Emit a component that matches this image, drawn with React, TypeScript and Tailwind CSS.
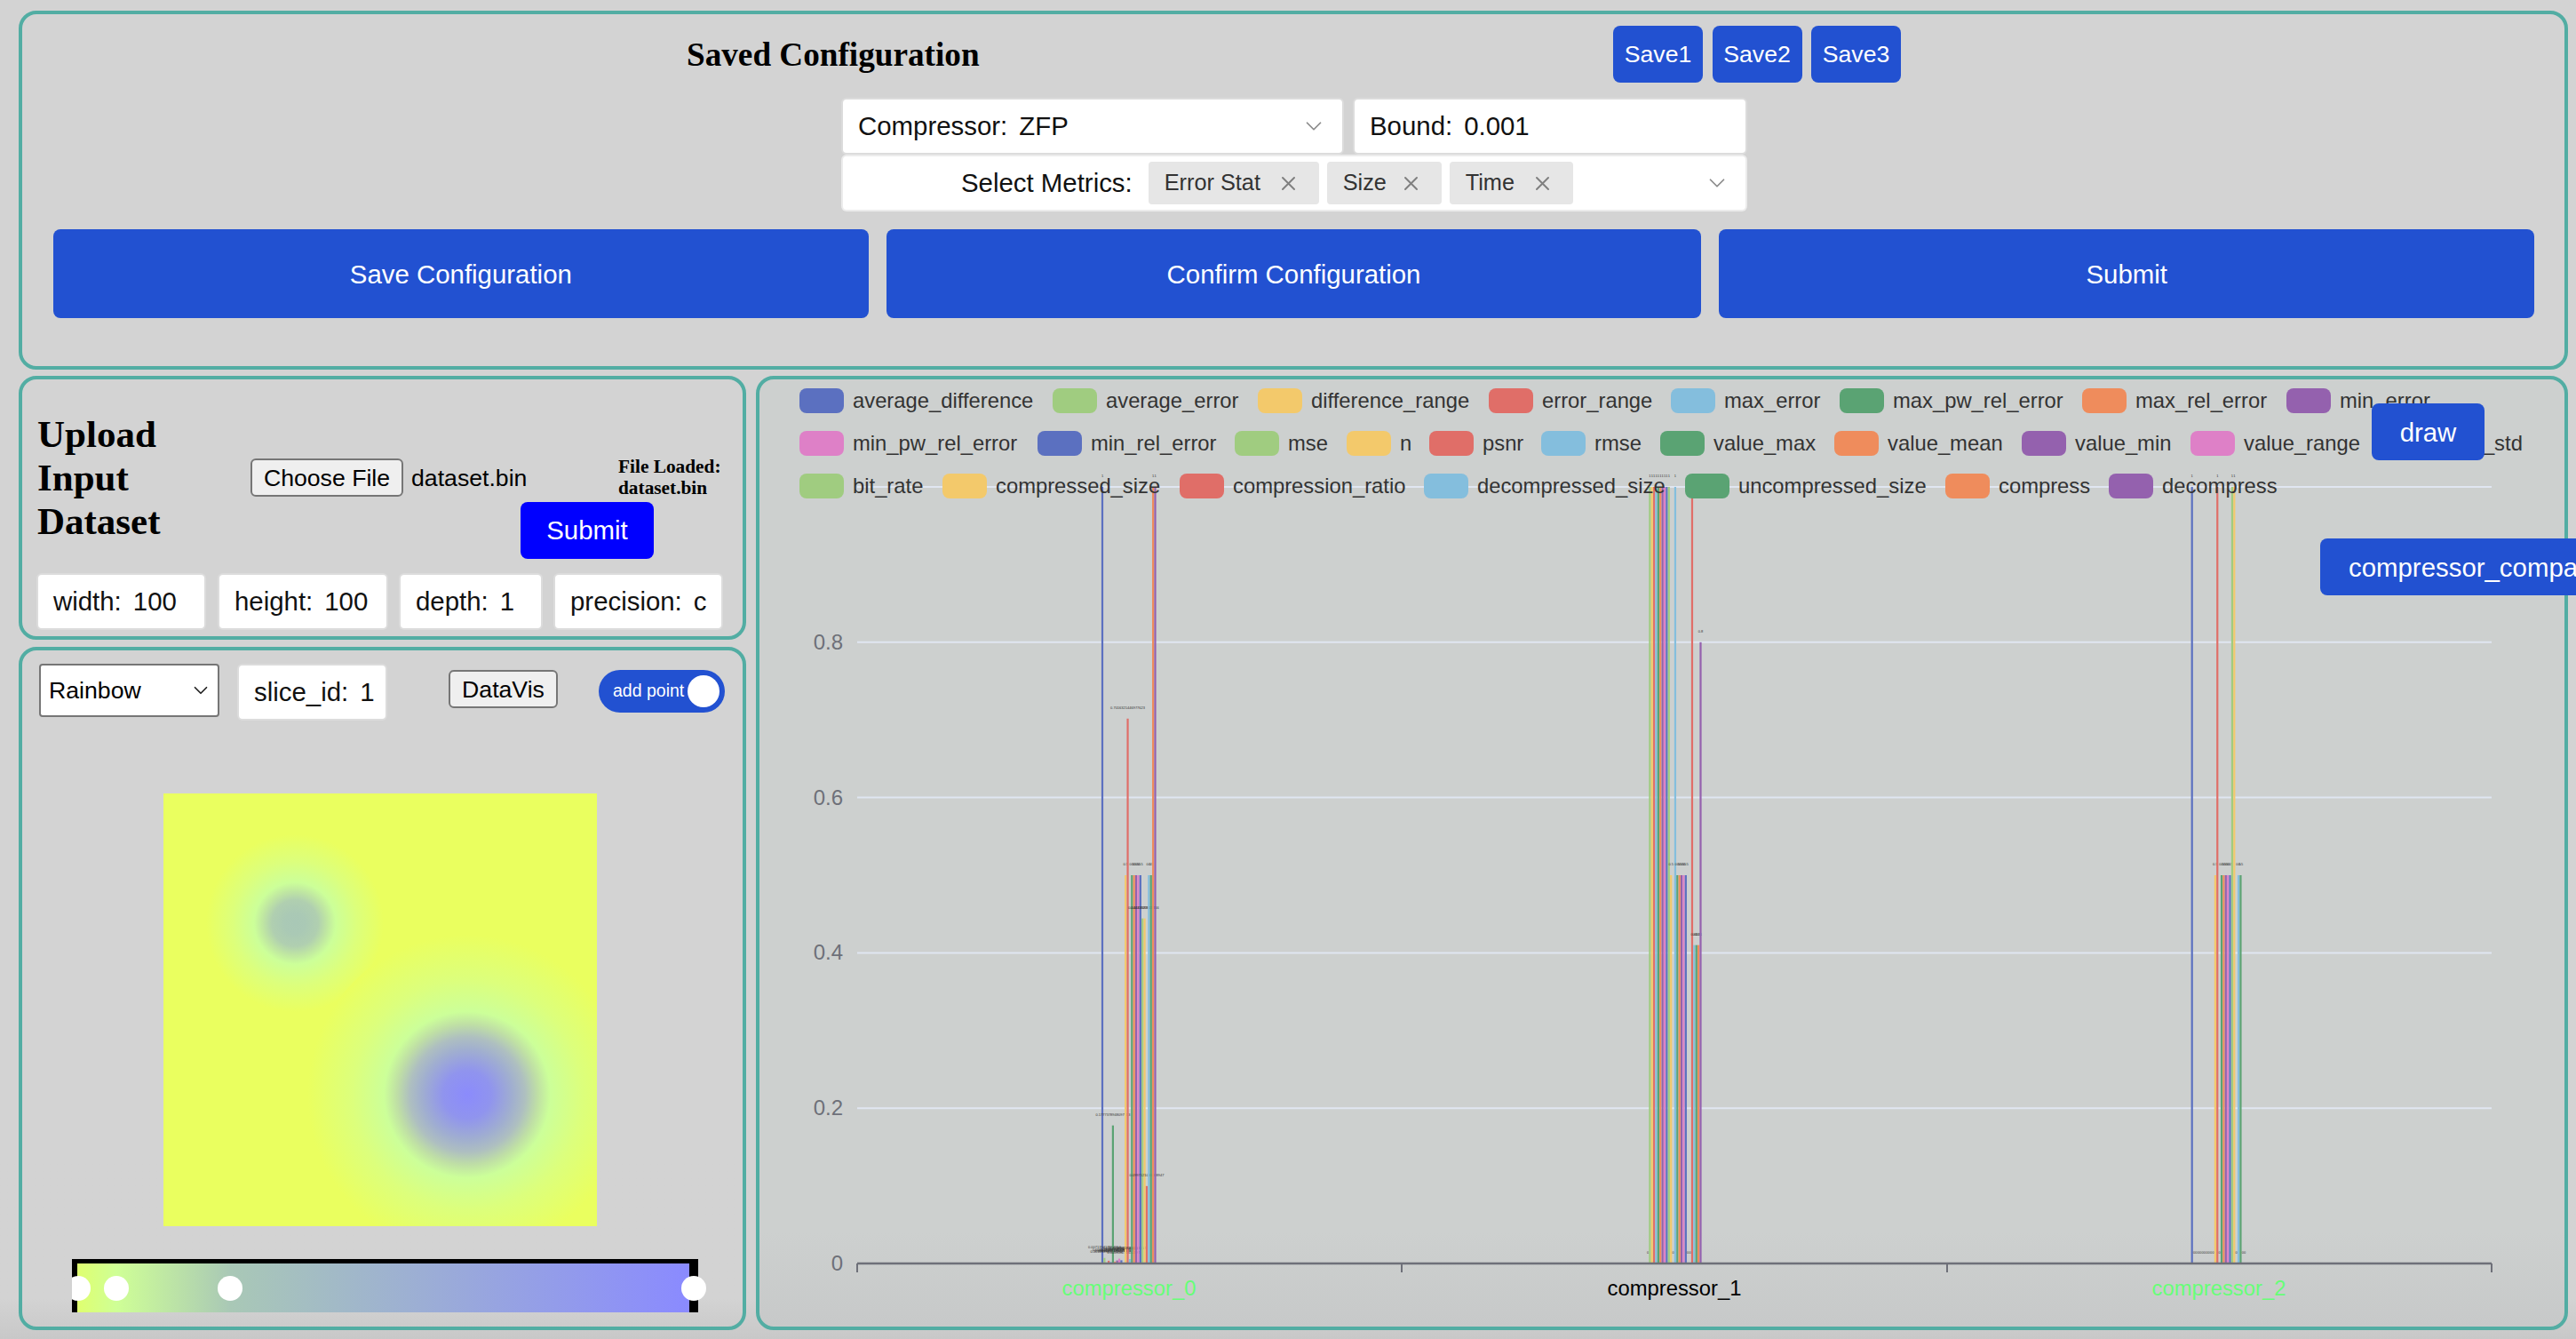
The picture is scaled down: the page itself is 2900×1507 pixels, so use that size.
import { ChevronDown } from 'lucide-react'

const BLUE = 'bg-[#2251d1]'

const COLORS = ['#5b70c0', '#a0cc80', '#f3c96b', '#e06e68', '#84bedd', '#5aa373', '#ef8c5c', '#9461ae', '#de80c7']

const LEGEND: { name: string; x: number; y: number }[] = [
  { name: 'average_difference', x: 900, y: 451 },
  { name: 'average_error', x: 1185, y: 451 },
  { name: 'difference_range', x: 1416, y: 451 },
  { name: 'error_range', x: 1676, y: 451 },
  { name: 'max_error', x: 1881, y: 451 },
  { name: 'max_pw_rel_error', x: 2071, y: 451 },
  { name: 'max_rel_error', x: 2344, y: 451 },
  { name: 'min_error', x: 2574, y: 451 },
  { name: 'min_pw_rel_error', x: 900, y: 499 },
  { name: 'min_rel_error', x: 1168, y: 499 },
  { name: 'mse', x: 1390, y: 499 },
  { name: 'n', x: 1516, y: 499 },
  { name: 'psnr', x: 1609, y: 499 },
  { name: 'rmse', x: 1735, y: 499 },
  { name: 'value_max', x: 1869, y: 499 },
  { name: 'value_mean', x: 2065, y: 499 },
  { name: 'value_min', x: 2276, y: 499 },
  { name: 'value_range', x: 2466, y: 499 },
  { name: 'value_std', x: 2678, y: 499 },
  { name: 'bit_rate', x: 900, y: 547 },
  { name: 'compressed_size', x: 1061, y: 547 },
  { name: 'compression_ratio', x: 1328, y: 547 },
  { name: 'decompressed_size', x: 1603, y: 547 },
  { name: 'uncompressed_size', x: 1897, y: 547 },
  { name: 'compress', x: 2190, y: 547 },
  { name: 'decompress', x: 2374, y: 547 },
]

const GROUPS: { start: number; values: number[] }[] = [
  {
    start: 1241,
    values: [
      1, 0.007139417892314, 0.001283945170263, 0.003517420938126, 0.002160394857213, 0.1777378948097913,
      0.002438190275634, 0.003917204586321, 0.006201938475612, 0.004128395017263, 0.000318274650192, 0.5,
      0.7016321446977623, 0.005718293046152, 0.5, 0.5, 0.5, 0.5, 0.5, 0.4443182905716, 0.4443182905716,
      0.0997121034488947, 0.5, 0.5, 1, 1,
    ],
  },
  {
    start: 1855,
    values: [0, 1, 1, 1, 1, 1, 1, 1, 1, 1, 1, 0.5, 0, 1, 0.5, 0.5, 0.5, 0.5, 0.5, 0, 0, 1, 0.41, 0.41, 0.41, 0.8],
  },
  {
    start: 2467.7,
    values: [1, 0, 0, 0, 0, 0, 0, 0, 0, 0, 0, 0.5, 1, 0, 0.5, 0.5, 0.5, 0.5, 0.5, 1, 1, 0, 0.5, 0.5, 0, 0],
  },
]

const BASE_Y = 1422
const UNIT = 874

function Field({ label, value, className }: { label: string; value: string; className: string }) {
  return (
    <div className={`flex h-[60px] items-center gap-[13px] overflow-hidden rounded-[4px] bg-white pl-[17px] text-[29.4px] text-[#111] ring-2 ring-[#dcdcdc] ${className}`}>
      <span>{label}</span>
      <span>{value}</span>
    </div>
  )
}

function Chevron({ className }: { className?: string }) {
  return <ChevronDown className={className} size={30} strokeWidth={1.4} color="#8a8a8a" />
}

function Tag({ label, className }: { label: string; className: string }) {
  return (
    <div className={`flex h-[48px] items-center justify-between rounded-[4px] bg-[#e6e6e6] pl-[18px] pr-[26px] text-[25.3px] text-[#333] ${className}`}>
      <span>{label}</span>
      <svg width="17" height="17" viewBox="0 0 17 17" stroke="#808080" strokeWidth="2" strokeLinecap="round">
        <path d="M2 2l13 13M15 2L2 15" />
      </svg>
    </div>
  )
}

function Heatmap() {
  return (
    <svg width="488" height="487" viewBox="0 0 488 487" className="block">
      <defs>
        <radialGradient id="smallBlob" gradientUnits="userSpaceOnUse" cx="148" cy="146" r="100">
          <stop offset="0" stopColor="#a9c8b6" />
          <stop offset="0.12" stopColor="#aac9b5" />
          <stop offset="0.26" stopColor="#b0cfb0" />
          <stop offset="0.36" stopColor="#bfe6a2" />
          <stop offset="0.46" stopColor="#ccff99" />
          <stop offset="0.7" stopColor="#dcff7c" />
          <stop offset="1" stopColor="#eaff5f" />
        </radialGradient>
        <radialGradient id="bigBlob" gradientUnits="userSpaceOnUse" cx="342" cy="339" r="180">
          <stop offset="0" stopColor="#8b8bfc" />
          <stop offset="0.15" stopColor="#9094ee" />
          <stop offset="0.28" stopColor="#a0aed0" />
          <stop offset="0.36" stopColor="#aebfc0" />
          <stop offset="0.44" stopColor="#bfdfa5" />
          <stop offset="0.52" stopColor="#ccff99" />
          <stop offset="0.72" stopColor="#dcff7c" />
          <stop offset="1" stopColor="#eaff5f" />
        </radialGradient>
      </defs>
      <rect width="488" height="487" fill="#eaff5f" />
      <circle cx="148" cy="146" r="100" fill="url(#smallBlob)" />
      <circle cx="342" cy="339" r="180" fill="url(#bigBlob)" />
    </svg>
  )
}

function ColorBar() {
  return (
    <svg width="705" height="60" viewBox="0 0 705 60" className="block overflow-visible">
      <defs>
        <linearGradient id="barFill" gradientUnits="userSpaceOnUse" x1="6" y1="0" x2="695" y2="0">
          <stop offset="0" stopColor="#dfff6f" />
          <stop offset="0.064" stopColor="#cfff96" />
          <stop offset="0.25" stopColor="#a9c8b6" />
          <stop offset="1" stopColor="#8a8aff" />
        </linearGradient>
        <clipPath id="firstHandle">
          <rect x="0" y="0" width="40" height="60" />
        </clipPath>
      </defs>
      <rect width="705" height="60" fill="#000" />
      <rect x="6" y="5" width="689" height="55" fill="url(#barFill)" />
      <circle cx="7" cy="33" r="14" fill="#fff" clipPath="url(#firstHandle)" />
      <circle cx="50" cy="33" r="14" fill="#fff" />
      <circle cx="178" cy="33" r="14" fill="#fff" />
      <circle cx="700" cy="33" r="14" fill="#fff" />
    </svg>
  )
}

function Chart() {
  return (
    <svg width="2032" height="1066" viewBox="855 427 2032 1066" className="block overflow-visible">
      {[1, 0.8, 0.6, 0.4, 0.2].map((v) => (
        <line key={v} x1="965" x2="2805" y1={BASE_Y - v * UNIT} y2={BASE_Y - v * UNIT} stroke="#e0e6f1" strokeWidth="2" />
      ))}
      {[0, 0.2, 0.4, 0.6, 0.8].map((v) => (
        <text key={v} x="949" y={BASE_Y - v * UNIT + 8} textAnchor="end" fontSize="24" fill="#6e7079">
          {v}
        </text>
      ))}
      {GROUPS.map((g) =>
        g.values.map((v, i) => {
          const x = g.start + i * 2.38
          const top = BASE_Y - v * UNIT
          return (
            <g key={`${g.start}-${i}`}>
              <rect x={x - 1.1} y={top} width="2.2" height={v * UNIT} fill={COLORS[i % 9]} />
              <text x={x} y={top - 11} textAnchor="middle" fontSize="4" fill="#333">
                {v}
              </text>
            </g>
          )
        }),
      )}
      <line x1="965" x2="2805" y1={BASE_Y} y2={BASE_Y} stroke="#6e7079" strokeWidth="2.5" />
      {[965, 1578, 2192, 2805].map((x) => (
        <line key={x} x1={x} x2={x} y1={BASE_Y} y2={BASE_Y + 10} stroke="#6e7079" strokeWidth="2" />
      ))}
      <text x="1271" y="1458" textAnchor="middle" fontSize="23.8" fill="#66ff77">compressor_0</text>
      <text x="1885" y="1458" textAnchor="middle" fontSize="23.8" fill="#000">compressor_1</text>
      <text x="2498" y="1458" textAnchor="middle" fontSize="23.8" fill="#66ff77">compressor_2</text>
      {LEGEND.map((item, i) => (
        <g key={item.name}>
          <rect x={item.x} y={item.y - 14} width="50" height="28" rx="8" fill={COLORS[i % 9]} />
          <text x={item.x + 60} y={item.y + 8} fontSize="23.8" fill="#333">
            {item.name}
          </text>
        </g>
      ))}
    </svg>
  )
}

export default function App() {
  return (
    <div className="h-[1507px] w-[2900px] overflow-hidden bg-[#d3d3d3] bg-linear-to-b from-[#d3d3d3] from-[97%] to-[#c8c8c8] pl-[21px] pt-[12px] font-['Liberation_Sans',Arial,sans-serif] text-black">
      <section className="h-[404px] w-[2870px] rounded-[20px] border-4 border-[#52ada3] pl-[35px] pr-[34px]">
        <div className="flex h-[77px] items-end">
          <h2 className="ml-[713px] h-[64px] w-[330px] whitespace-nowrap font-['Liberation_Serif',serif] text-[37.2px] font-bold leading-[66px]">
            Saved Configuration
          </h2>
          <div className="ml-[713px] flex gap-[10.5px]">
            {['Save1', 'Save2', 'Save3'].map((s) => (
              <button key={s} className={`h-[64px] w-[101px] rounded-[8px] text-[26.67px] text-white ${BLUE}`}>
                {s}
              </button>
            ))}
          </div>
        </div>
        <div className="ml-[889px] mt-[19px] w-[1016px]">
          <div className="flex gap-[14px]">
            <div className="relative w-[562px]">
              <Field label="Compressor:" value="ZFP" className="w-full" />
              <Chevron className="absolute right-[17px] top-[15px]" />
            </div>
            <Field label="Bound:" value="0.001" className="w-[440px]" />
          </div>
          <div className="mt-[4px] flex h-[60px] items-center rounded-[4px] bg-white pl-[133px] pr-[17px] ring-2 ring-[#ececec]">
            <span className="text-[29.4px] text-[#111]">Select Metrics:</span>
            <div className="ml-[18px] flex gap-[9px]">
              <Tag label="Error Stat" className="w-[192px]" />
              <Tag label="Size" className="w-[129px]" />
              <Tag label="Time" className="w-[139px]" />
            </div>
            <Chevron className="ml-auto" />
          </div>
        </div>
        <div className="mt-[22px] flex gap-[20px]">
          {['Save Configuration', 'Confirm Configuration', 'Submit'].map((s) => (
            <button key={s} className={`h-[100px] flex-1 rounded-[8px] pt-[2px] text-[29.4px] text-white ${BLUE}`}>
              {s}
            </button>
          ))}
        </div>
      </section>

      <div className="mt-[7px] flex gap-[11px]">
        <div className="flex w-[819px] flex-col gap-[8px]">
          <section className="h-[297px] rounded-[20px] border-4 border-[#52ada3]">
            <div className="flex h-[220px] pl-[17px] pt-[37px]">
              <h2 className="w-[240px] font-['Liberation_Serif',serif] text-[43px] font-bold leading-[49px]">
                Upload
                <br />
                Input
                <br />
                Dataset
              </h2>
              <div className="mt-[52px] flex h-[43px] w-[304px] items-center whitespace-nowrap text-[26.67px]">
                <button className="h-[43px] w-[172px] shrink-0 rounded-[6px] border-2 border-[#767676] bg-[#efefef]">Choose File</button>
                <span className="ml-[9px]">dataset.bin</span>
              </div>
              <div className="mt-[49px]">
                <p className="ml-[110px] whitespace-nowrap font-['Liberation_Serif',serif] text-[21.33px] font-bold leading-[24px]">
                  File Loaded:
                  <br />
                  dataset.bin
                </p>
                <button className="mt-[4px] h-[64px] w-[150px] rounded-[8px] bg-[#0000ff] pt-[1px] text-[29.4px] text-white">Submit</button>
              </div>
            </div>
            <div className="ml-[18px] flex gap-[16px]">
              <Field label="width:" value="100" className="w-[187px]" />
              <Field label="height:" value="100" className="ml-[1px] w-[188px]" />
              <Field label="depth:" value="1" className="w-[158px]" />
              <Field label="precision:" value="c" className="w-[187px]" />
            </div>
          </section>

          <section className="h-[769px] rounded-[20px] border-4 border-[#52ada3]">
            <div className="ml-[19px] mt-[15px] flex items-start">
              <div className="flex h-[60px] w-[203px] items-center justify-between rounded-[4px] border-2 border-[#767676] bg-white pl-[9px] pr-[6px] text-[26.67px]">
                <span>Rainbow</span>
                <ChevronDown size={26} strokeWidth={1.6} color="#222" />
              </div>
              <Field label="slice_id:" value="1" className="ml-[22px] mt-[2px] w-[165px]" />
              <button className="ml-[71px] mt-[7px] h-[43px] w-[123px] rounded-[6px] border-2 border-[#767676] bg-[#efefef] text-[26.67px]">
                DataVis
              </button>
              <div className={`ml-[46px] mt-[7px] flex h-[48px] w-[142px] items-center justify-between rounded-full pl-[16px] pr-[6px] text-[19.5px] text-white ${BLUE}`}>
                <span>add point</span>
                <span className="h-[36px] w-[36px] rounded-full bg-white" />
              </div>
            </div>
            <div className="ml-[159px] mt-[84px]">
              <Heatmap />
            </div>
            <div className="ml-[56px] mt-[37px]">
              <ColorBar />
            </div>
          </section>
        </div>

        <section className="relative h-[1074px] w-[2040px] rounded-[20px] border-4 border-[#52ada3] bg-[#cdd0cf] bg-linear-to-b from-[#cdd0cf] from-[90%] to-[#c7c9c9]">
          <Chart />
          <button className={`absolute left-[1815px] top-[27px] h-[64px] w-[127px] rounded-[8px] pt-[2px] text-[29.4px] text-white ${BLUE}`}>
            draw
          </button>
          <button className={`absolute left-[1757px] top-[179px] h-[64px] whitespace-nowrap rounded-[8px] px-[32px] pt-[2px] text-[29.4px] text-white ${BLUE}`}>
            compressor_comparison
          </button>
        </section>
      </div>
    </div>
  )
}
